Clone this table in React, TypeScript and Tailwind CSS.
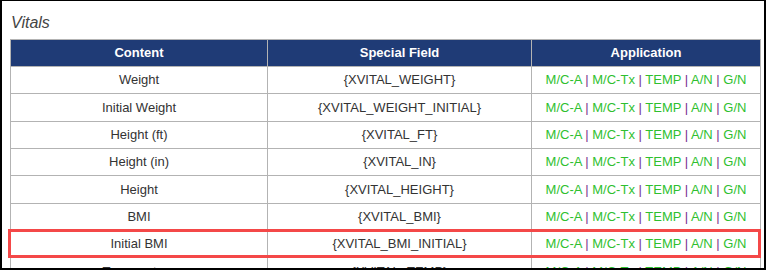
import React from 'react';

const rows = [
  { content: 'Weight', field: '{XVITAL_WEIGHT}' },
  { content: 'Initial Weight', field: '{XVITAL_WEIGHT_INITIAL}' },
  { content: 'Height (ft)', field: '{XVITAL_FT}' },
  { content: 'Height (in)', field: '{XVITAL_IN}' },
  { content: 'Height', field: '{XVITAL_HEIGHT}' },
  { content: 'BMI', field: '{XVITAL_BMI}' },
  { content: 'Initial BMI', field: '{XVITAL_BMI_INITIAL}', highlight: true },
  { content: 'Temperature', field: '{XVITAL_TEMP}' },
];

const apps = ['M/C-A', 'M/C-Tx', 'TEMP', 'A/N', 'G/N'];

function AppLinks() {
  return (
    <span>
      {apps.map((a, i) => (
        <React.Fragment key={a}>
          {i > 0 && <span className="text-[#7b2f8e]"> | </span>}
          <span className="text-[#2fbf2f]">{a}</span>
        </React.Fragment>
      ))}
    </span>
  );
}

export default function App() {
  return (
    <div
      className="w-[766px] h-[270px] overflow-hidden border-2 border-t border-black bg-white pl-2 pr-[4px]"
      style={{ fontFamily: '"Liberation Sans", Arial, sans-serif' }}
    >
      <div className="pt-[12px] pl-[1px] h-[38px] text-[16px] leading-[20px] italic text-[#444]">Vitals</div>
      <table className="w-[750px] border-collapse table-fixed text-[13px] text-[#333]">
        <colgroup>
          <col className="w-[257px]" />
          <col className="w-[264px]" />
          <col className="w-[229px]" />
        </colgroup>
        <thead>
          <tr className="h-[27px] bg-[#1f3b76] text-white font-bold">
            <th className="border border-[#b3b3b3] p-0 text-center">Content</th>
            <th className="border border-[#b3b3b3] p-0 text-center">Special Field</th>
            <th className="border border-[#b3b3b3] p-0 text-center">Application</th>
          </tr>
        </thead>
        <tbody>
          {rows.map((r) => (
            <tr key={r.content} className="h-[27.33px]">
              <td className="border border-[#b3b3b3] p-0 text-center relative">
                {r.highlight && (
                  <div className="absolute -left-[3px] -top-[2px] w-[753px] h-[29px] border-[3px] border-[#f44848] pointer-events-none" />
                )}
                {r.content}
              </td>
              <td className="border border-[#b3b3b3] p-0 text-center">{r.field}</td>
              <td className="border border-[#b3b3b3] p-0 text-center">
                <AppLinks />
              </td>
            </tr>
          ))}
        </tbody>
      </table>
    </div>
  );
}
